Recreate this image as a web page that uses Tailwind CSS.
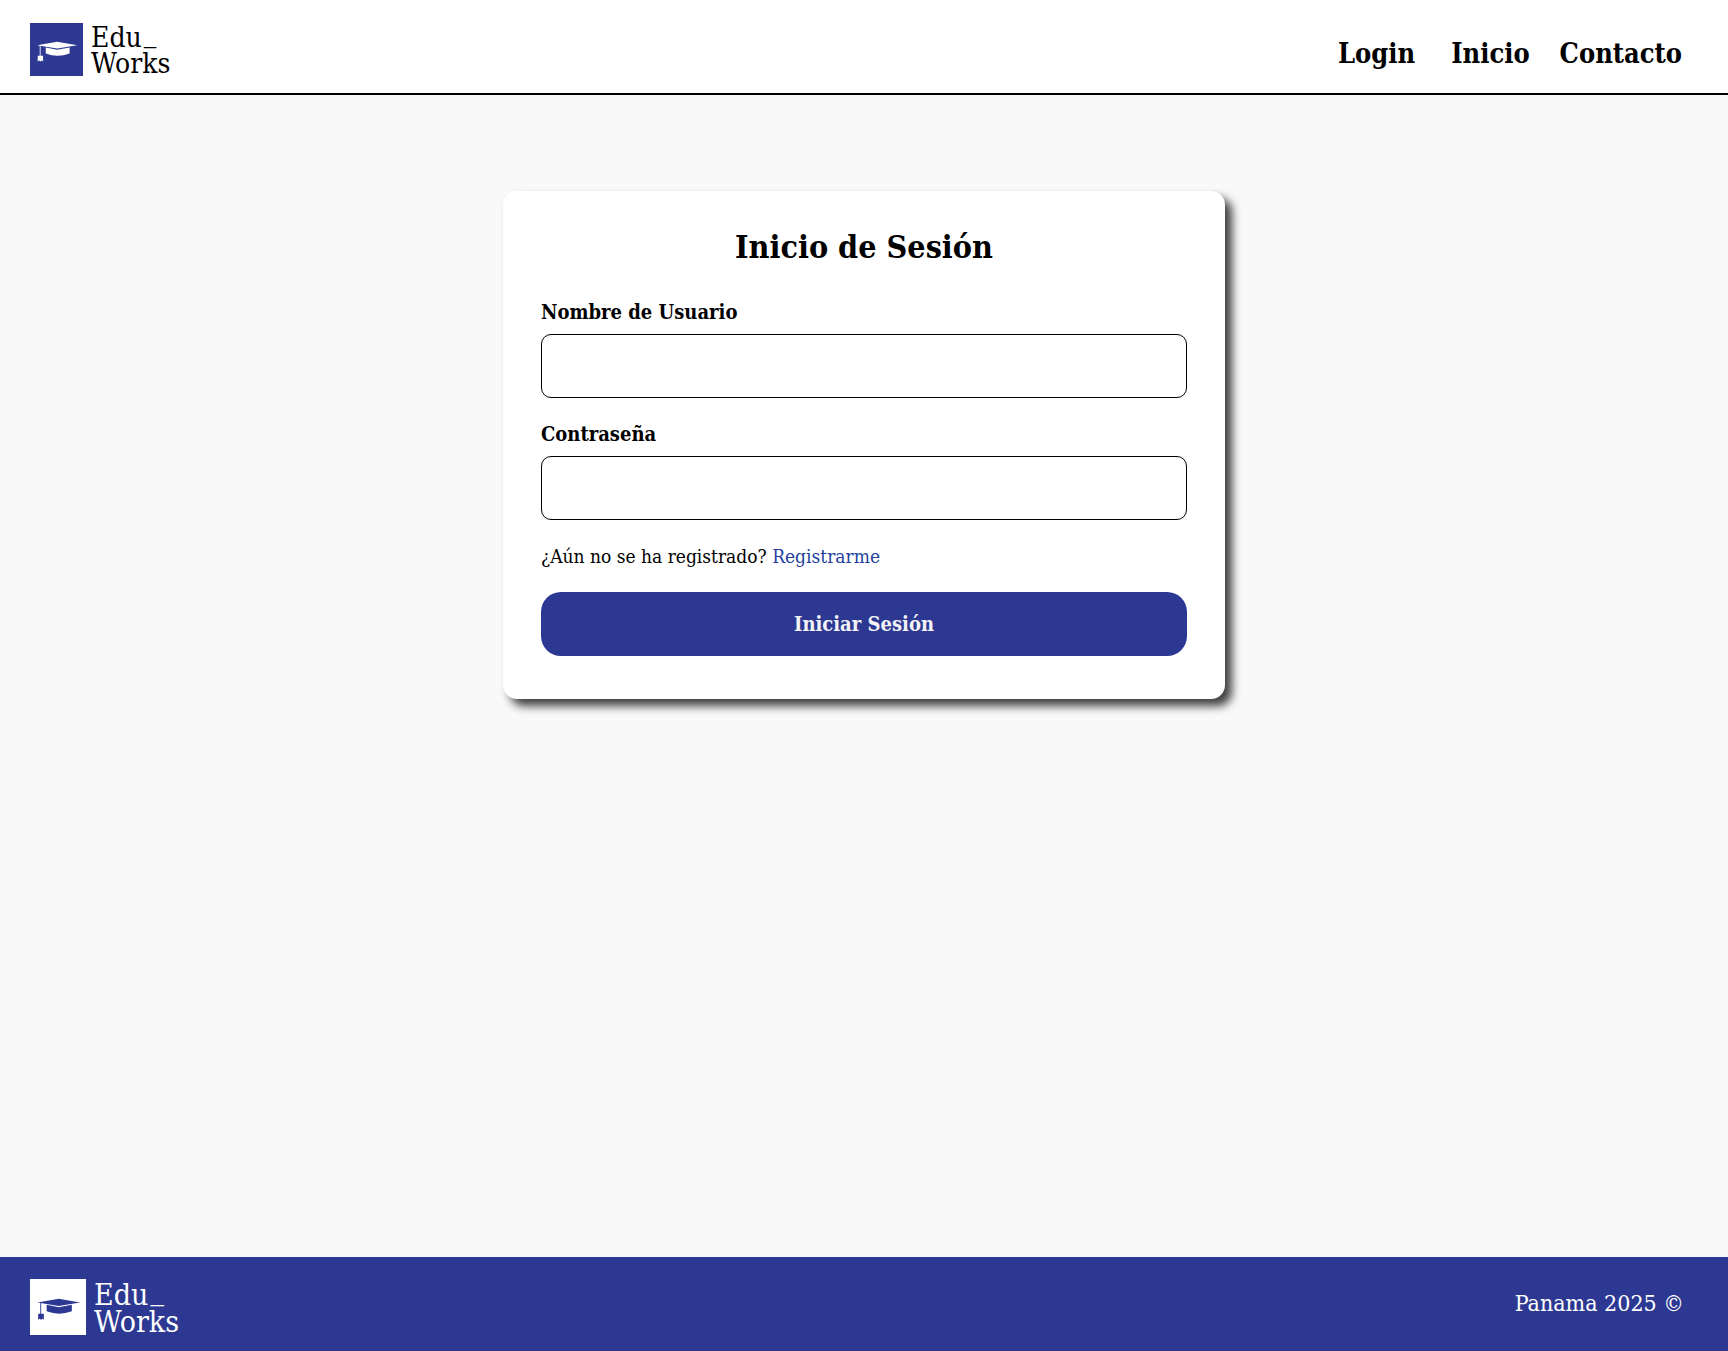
<!DOCTYPE html>
<html lang="es">
<head>
<meta charset="utf-8">
<meta name="viewport" content="width=device-width, initial-scale=1">
<title>Edu_Works - Inicio de Sesión</title>
<script src="https://cdn.jsdelivr.net/npm/@tailwindcss/browser@4"></script>
</head>
<body class="flex min-h-screen flex-col bg-[#f9f9f9] font-['DejaVu_Serif_Condensed','DejaVu_Serif',serif] text-black">
  <header class="flex items-start justify-between border-b-2 border-black bg-white pt-[23px] pr-[46px] pb-4 pl-[30px]">
    <a href="#" class="flex items-start gap-2" aria-label="Edu_Works">
      <svg viewBox="0 0 158 158" class="size-[53px]" aria-hidden="true">
        <rect width="158" height="158" fill="#2c3891"/>
        <g fill="#fff">
          <path d="M21 66 81 56 141 66 81 76Z"/>
          <path d="M47 73 81 80 118 73V91Q82 105 47 91Z"/>
          <path d="M29 66H31.500V98H39V115L35 112 31 115 27 112 23 115V98H29Z"/>
        </g>
      </svg>
      <span class="flex flex-col pt-0.5 text-[28px] leading-[26px]">
        <span class="flex items-start gap-0.5">Edu<span class="leading-4">_</span></span>
        <span>Works</span>
      </span>
    </a>
    <nav class="mt-[13px] flex gap-[30px] text-[27px] leading-9 font-bold">
      <a href="#" class="pr-1.5">Login</a>
      <a href="#">Inicio</a>
      <a href="#">Contacto</a>
    </nav>
  </header>

  <main class="flex grow flex-col items-center px-4 pt-24 pb-16">
    <form class="flex w-full max-w-[722px] flex-col gap-6 rounded-[14px] bg-white px-[38px] pt-9 pb-[43px] shadow-[7px_7px_10px_rgba(0,0,0,0.75)]">
      <h1 class="mb-[9px] text-center text-[32px] leading-10 font-bold">Inicio de Sesión</h1>
      <div class="flex flex-col gap-2.5">
        <label for="usuario" class="text-[20px] leading-6 font-bold">Nombre de Usuario</label>
        <input id="usuario" type="text" class="h-16 rounded-[10px] border border-black bg-white px-4 text-[19px]">
      </div>
      <div class="flex flex-col gap-2.5">
        <label for="clave" class="text-[20px] leading-6 font-bold">Contraseña</label>
        <input id="clave" type="password" class="h-16 rounded-[10px] border border-black bg-white px-4 text-[19px]">
      </div>
      <p class="text-[19px] leading-6">¿Aún no se ha registrado? <a href="#" class="text-[#233fa0]">Registrarme</a></p>
      <button type="button" class="h-16 rounded-[20px] bg-[#2c3891] text-[20px] font-bold text-[#f2f2f7]">Iniciar Sesión</button>
    </form>
  </main>

  <footer class="flex items-start justify-between bg-[#2c3891] pt-[22px] pr-11 pb-4 pl-[30px] text-white">
    <a href="#" class="flex items-start gap-2" aria-label="Edu_Works">
      <svg viewBox="0 0 158 158" class="size-14" aria-hidden="true">
        <rect width="158" height="158" fill="#fff"/>
        <g fill="#2c3891">
          <path d="M21 66 81 56 141 66 81 76Z"/>
          <path d="M47 73 81 80 118 73V91Q82 105 47 91Z"/>
          <path d="M29 66H31.500V98H39V115L35 112 31 115 27 112 23 115V98H29Z"/>
        </g>
      </svg>
      <span class="flex flex-col pt-0.5 text-[30px] leading-[27px]">
        <span class="flex items-start gap-0.5">Edu<span class="leading-4">_</span></span>
        <span>Works</span>
      </span>
    </a>
    <p class="mt-2 text-[23px] leading-8">Panama 2025 ©</p>
  </footer>
</body>
</html>
